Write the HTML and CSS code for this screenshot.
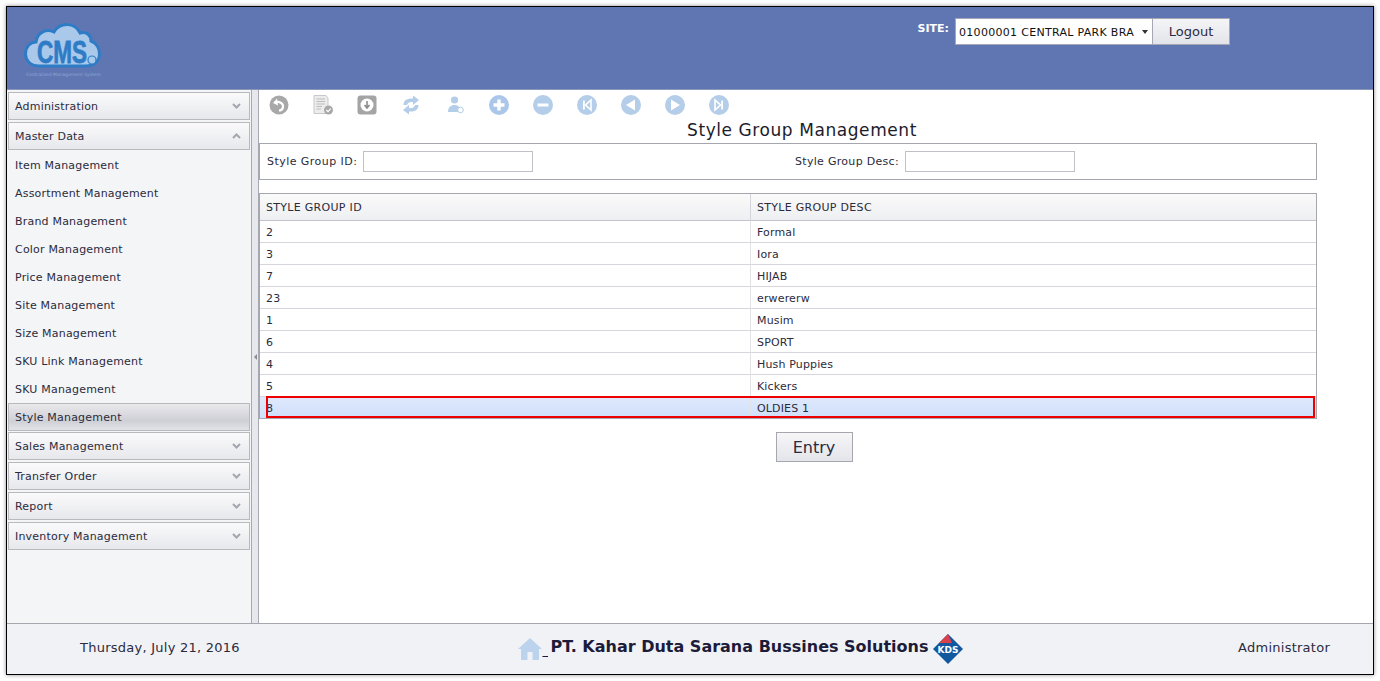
FILE: index.html
```html
<!DOCTYPE html>
<html lang="en">

<head>
    <meta charset="UTF-8">
    <meta name="viewport" content="width=device-width, initial-scale=1.0">
    <title>Style Group Management</title>
    <link rel="stylesheet" href="styles.css">
</head>

<body>
    <div class="window">
        <header class="top">
            <div class="logo">
                <svg width="78" height="48" viewBox="0 0 78 48">
                    <path d="M15 44 C6 44 1.5 38 1.5 32 C1.5 25 6 20 12 20 C13 11 22 6 30 10 C36 0 51 0 56 11 C62 9 67 13 67 19 C72 21 75.5 26 75.5 32 C75.5 39 70 44 62 44 Z" fill="#a9c8ea" stroke="#2f7cc6" stroke-width="3"/>
                    <text x="38" y="41" text-anchor="middle" class="logo-text" textLength="50" lengthAdjust="spacingAndGlyphs">CMS</text>
                    <circle cx="68" cy="38" r="4" fill="#a9c8ea" stroke="#2f7cc6" stroke-width="1.2"/>
                </svg>
                <div class="logo-sub">Centralized Management System</div>
            </div>
            <div class="site">
                <label class="site-label">SITE:</label>
                <div class="site-select">
                    <span class="site-value">01000001 CENTRAL PARK BRA</span>
                    <span class="site-arrow"></span>
                </div>
                <button class="logout">Logout</button>
            </div>
        </header>

        <div class="middle">
            <nav class="sidebar">
                <div class="nav-head">Administration<svg class="chev" width="9" height="6" viewBox="0 0 9 6"><path d="M1 1 L4.5 4.5 L8 1" /></svg></div>
                <div class="nav-head">Master Data<svg class="chev" width="9" height="6" viewBox="0 0 9 6"><path d="M1 5 L4.5 1.5 L8 5" /></svg></div>
                <ul class="nav-list">
                    <li>Item Management</li>
                    <li>Assortment Management</li>
                    <li>Brand Management</li>
                    <li>Color Management</li>
                    <li>Price Management</li>
                    <li>Site Management</li>
                    <li>Size Management</li>
                    <li>SKU Link Management</li>
                    <li>SKU Management</li>
                </ul>
                <div class="nav-active">Style Management</div>
                <div class="nav-head nav-tight">Sales Management<svg class="chev" width="9" height="6" viewBox="0 0 9 6"><path d="M1 1 L4.5 4.5 L8 1" /></svg></div>
                <div class="nav-head">Transfer Order<svg class="chev" width="9" height="6" viewBox="0 0 9 6"><path d="M1 1 L4.5 4.5 L8 1" /></svg></div>
                <div class="nav-head">Report<svg class="chev" width="9" height="6" viewBox="0 0 9 6"><path d="M1 1 L4.5 4.5 L8 1" /></svg></div>
                <div class="nav-head">Inventory Management<svg class="chev" width="9" height="6" viewBox="0 0 9 6"><path d="M1 1 L4.5 4.5 L8 1" /></svg></div>
            </nav>
            <div class="splitter"><span class="splitter-arrow"></span></div>

            <main class="content">
                <div class="toolbar">
                    <!-- back -->
                    <svg width="20" height="20" viewBox="0 0 20 20"><circle cx="10" cy="10" r="9.5" fill="#a8a8a8"/><path d="M8 3.5 L4 8 L9 10.5 Z" fill="#fff"/><path d="M6.5 7.5 C10 6 14.5 8 14 12 C13.7 14 12 15.5 10 15.5" fill="none" stroke="#fff" stroke-width="2.2"/></svg>
                    <!-- document -->
                    <svg width="20" height="20" viewBox="0 0 20 20"><path d="M1 0.5 H13 L15 3 V18.5 H1 Z" fill="#ececec" stroke="#c8c8c8"/><path d="M3.5 4 H12 M3.5 6.5 H12 M3.5 9 H12 M3.5 11.5 H9 M3.5 14 H8" stroke="#bcbcbc"/><circle cx="15.5" cy="15" r="4.5" fill="#a8a8a8"/><path d="M13.3 15 L15 16.7 L17.8 13.6" fill="none" stroke="#fff" stroke-width="1.2"/></svg>
                    <!-- save -->
                    <svg width="20" height="20" viewBox="0 0 20 20"><rect x="0.5" y="0.5" width="19" height="19" rx="3" fill="#a4a4a4"/><circle cx="10" cy="10" r="6.5" fill="#fff"/><path d="M10 6 V12 M7.5 10 L10 13 L12.5 10" fill="none" stroke="#8c8c8c" stroke-width="1.6"/></svg>
                    <!-- refresh -->
                    <svg width="20" height="20" viewBox="0 0 20 20"><path d="M2.5 10 C2.5 5 6.5 3 12 3.5 V0.5 L18 5 L12 10 V7 C9 6.5 6.5 7.5 6 10 Z" fill="#b4cde8"/><path d="M17.5 10 C17.5 15 13.5 17 8 16.5 V19.5 L2 15 L8 10 V13 C11 13.5 13.5 12.5 14 10 Z" fill="#b4cde8"/></svg>
                    <!-- user -->
                    <svg width="20" height="20" viewBox="0 0 20 20"><circle cx="9.5" cy="5" r="3.6" fill="#b4cde8"/><path d="M3 17 C3 12 6 10 9.5 10 C13 10 16 12 16 17 Z" fill="#b4cde8"/><circle cx="15.5" cy="15" r="2.8" fill="#fff" stroke="#b4cde8"/></svg>
                    <!-- add -->
                    <svg width="20" height="20" viewBox="0 0 20 20"><circle cx="10" cy="10" r="10" fill="#aac6e8"/><path d="M10 4.5 V15.5 M4.5 10 H15.5" stroke="#fff" stroke-width="3.4"/></svg>
                    <!-- remove -->
                    <svg width="20" height="20" viewBox="0 0 20 20"><circle cx="10" cy="10" r="10" fill="#b4cde8"/><path d="M4.5 10 H15.5" stroke="#fff" stroke-width="3"/></svg>
                    <!-- first -->
                    <svg width="20" height="20" viewBox="0 0 20 20"><circle cx="10" cy="10" r="10" fill="#b4cde8"/><rect x="6" y="5.5" width="1.8" height="9" fill="#fff"/><path d="M14 5 V15 L8.5 10 Z" fill="none" stroke="#fff" stroke-width="1.6"/></svg>
                    <!-- previous -->
                    <svg width="20" height="20" viewBox="0 0 20 20"><circle cx="10" cy="10" r="10" fill="#b4cde8"/><path d="M14 4.5 V15.5 L5 10 Z" fill="#fff"/></svg>
                    <!-- next -->
                    <svg width="20" height="20" viewBox="0 0 20 20"><circle cx="10" cy="10" r="10" fill="#b4cde8"/><path d="M6 4.5 V15.5 L15 10 Z" fill="#fff"/></svg>
                    <!-- last -->
                    <svg width="20" height="20" viewBox="0 0 20 20"><circle cx="10" cy="10" r="10" fill="#b4cde8"/><rect x="12.2" y="5.5" width="1.8" height="9" fill="#fff"/><path d="M6 5 V15 L11.5 10 Z" fill="none" stroke="#fff" stroke-width="1.6"/></svg>
                </div>

                <h1 class="title">Style Group Management</h1>

                <div class="search">
                    <div class="field field-id">
                        <label>Style Group ID:</label>
                        <input type="text" class="text-input">
                    </div>
                    <div class="field">
                        <label>Style Group Desc:</label>
                        <input type="text" class="text-input">
                    </div>
                </div>

                <div class="grid-wrap">
                    <table class="grid">
                        <thead>
                            <tr>
                                <th class="col-id">STYLE GROUP ID</th>
                                <th>STYLE GROUP DESC</th>
                            </tr>
                        </thead>
                        <tbody>
                            <tr><td>2</td><td>Formal</td></tr>
                            <tr><td>3</td><td>Iora</td></tr>
                            <tr><td>7</td><td>HIJAB</td></tr>
                            <tr><td>23</td><td>erwererw</td></tr>
                            <tr><td>1</td><td>Musim</td></tr>
                            <tr><td>6</td><td>SPORT</td></tr>
                            <tr><td>4</td><td>Hush Puppies</td></tr>
                            <tr><td>5</td><td>Kickers</td></tr>
                            <tr class="selected"><td>8</td><td>OLDIES 1</td></tr>
                        </tbody>
                    </table>
                    <div class="red-mark"></div>
                </div>

                <div class="actions">
                    <button class="entry">Entry</button>
                </div>
            </main>
        </div>

        <footer class="bottom">
            <div class="date">Thursday, July 21, 2016</div>
            <div class="company">
                <svg width="24" height="24" viewBox="0 0 24 24"><path d="M12 1 L24 12 H21 V23 H14.5 V15 H9.5 V23 H3 V12 H0 Z" fill="#bcd3ee"/></svg>
                <span class="company-gap">&nbsp;</span><span class="company-name">PT. Kahar Duta Sarana Bussines Solutions</span>
                <svg class="kds" width="30" height="30" viewBox="0 0 30 30"><path d="M15 0 L30 15 L15 30 L0 15 Z" fill="#12589f"/><path d="M15 0 L6 9 H19 Z" fill="#d9404a"/><text x="15" y="19" text-anchor="middle" class="kds-text">KDS</text></svg>
            </div>
            <div class="user">Administrator</div>
        </footer>
    </div>
</body>

</html>
```

FILE: styles.css
```css
* {
    box-sizing: border-box;
}

body {
    margin: 0;
    background-color: #fff;
    font-family: "DejaVu Sans", Verdana, sans-serif;
    font-size: 11px;
    color: #2b2b3d;
}

.window {
    width: 1368px;
    height: 669px;
    margin: 6px;
    border: 1px solid #000;
    box-shadow: 0 0 4px rgba(0, 0, 0, 0.45);
    display: flex;
    flex-direction: column;
    overflow: hidden;
}

/* header */
.top {
    height: 83px;
    flex: none;
    background-color: #5f76b3;
    border-bottom: 1px solid #8a97b8;
    display: flex;
    justify-content: space-between;
    padding: 15px 143px 0 17px;
}

.logo {
    width: 78px;
}

.logo svg {
    display: block;
    overflow: visible;
}

.logo-text {
    font-family: "Liberation Sans", sans-serif;
    font-size: 32px;
    font-weight: bold;
    fill: #2f7cc6;
    stroke: #2f7cc6;
    stroke-width: 0.8px;
}

.logo-sub {
    font-size: 4.5px;
    line-height: 6px;
    margin-top: 2px;
    padding-left: 2px;
    color: #8fa6d4;
    white-space: nowrap;
}

.site {
    display: flex;
    align-items: flex-start;
    margin-top: -4px;
}

.site-label {
    color: #fff;
    font-weight: bold;
    font-size: 11px;
    line-height: 14px;
    margin: 4px 6px 0 0;
}

.site-select {
    width: 198px;
    height: 27px;
    background-color: #fff;
    border: 1px solid #a6a6b4;
    display: flex;
    align-items: center;
    justify-content: space-between;
    padding: 1px 4px 0 3px;
    color: #111;
    letter-spacing: 0.3px;
}

.site-value {
    width: 178px;
    overflow: hidden;
    white-space: nowrap;
}

.site-arrow {
    border-left: 3.5px solid transparent;
    border-right: 3.5px solid transparent;
    border-top: 4px solid #333;
}

.logout {
    width: 77px;
    height: 27px;
    border: 1px solid #a6a6b4;
    border-left: 0;
    background: linear-gradient(#f5f5f7, #e3e4ea);
    font-family: inherit;
    font-size: 13px;
    color: #2b2b3d;
    padding: 0;
}

/* sidebar */
.middle {
    flex: 1;
    display: flex;
    min-height: 0;
}

.sidebar {
    width: 244px;
    flex: none;
    background-color: #f4f5f7;
    padding: 2px 1px 0 1px;
}

.nav-head,
.nav-active {
    height: 28px;
    border: 1px solid #b9b9bd;
    margin-bottom: 2px;
    padding: 0 8px 0 6px;
    display: flex;
    align-items: center;
    justify-content: space-between;
    letter-spacing: 0.2px;
    background: linear-gradient(#fafafb, #e7e8ec);
}

.nav-tight {
    margin-top: 1px;
}

.chev {
    fill: none;
    stroke: #a6a6ae;
    stroke-width: 2;
}

.nav-list {
    list-style: none;
    margin: 0;
    padding: 0;
}

.nav-list li {
    height: 28px;
    line-height: 28px;
    padding-left: 7px;
    letter-spacing: 0.2px;
}

.nav-active {
    margin: -1px 0 0;
    background: linear-gradient(#e9e9ec, #cfd0d6 65%, #e2e3e7);
}

.splitter {
    width: 8px;
    flex: none;
    background-color: #e6e8ee;
    border-left: 1px solid #a8a8b0;
    border-right: 1px solid #a8a8b0;
    display: flex;
    align-items: center;
    justify-content: center;
}

.splitter-arrow {
    border-top: 3px solid transparent;
    border-bottom: 3px solid transparent;
    border-right: 3px solid #8a8a92;
}

/* main area */
.content {
    flex: 1;
    background-color: #fff;
    min-width: 0;
}

.toolbar {
    height: 30px;
    display: flex;
    align-items: center;
    gap: 24px;
    padding: 0 0 0 10px;
}

.title {
    width: 1086px;
    margin: 0;
    height: 23px;
    line-height: 20px;
    text-align: center;
    font-size: 17px;
    font-weight: normal;
    letter-spacing: 0.57px;
    color: #1c1c2c;
}

.search {
    width: 1058px;
    height: 37px;
    border: 1px solid #a6a6ae;
    display: flex;
    align-items: center;
    padding-left: 7px;
    letter-spacing: 0.3px;
}

.field {
    display: flex;
    align-items: center;
    gap: 6px;
}

.field-id {
    width: 528px;
    letter-spacing: 0.45px;
}

.text-input {
    width: 170px;
    height: 21px;
    border: 1px solid #c0c0c8;
    background-color: #fff;
    padding: 0;
}

.grid-wrap {
    position: relative;
    width: 1058px;
    margin-top: 13px;
}

.grid {
    width: 100%;
    border-collapse: separate;
    border-spacing: 0;
    table-layout: fixed;
    border: 1px solid #a6a6ae;
}

.grid th {
    height: 27px;
    font-weight: normal;
    text-align: left;
    padding: 0 6px;
    letter-spacing: 0.3px;
    background: linear-gradient(#fafafa, #eeeff2);
    border-bottom: 1px solid #c4c4cc;
    border-left: 1px solid #d4d4da;
}

.grid .col-id {
    width: 490px;
    border-left: 0;
}

.grid td {
    height: 22px;
    padding: 1px 6px 0;
    border-bottom: 1px solid #d6d6dc;
    border-left: 1px solid #e2e2e6;
    letter-spacing: 0.15px;
}

.grid td:first-child {
    border-left: 0;
}

.grid tr.selected td {
    height: 21px;
    background: linear-gradient(#dfe9fd, #cfdffa);
    border-bottom: 0;
}

/* red box on the screenshot, lies over the selected row */
.red-mark {
    position: absolute;
    left: 7px;
    right: 2px;
    bottom: 1px;
    height: 22px;
    border: 2px solid #ee0000;
}

.actions {
    width: 1110px;
    margin-top: 13px;
    display: flex;
    justify-content: center;
}

.entry {
    width: 77px;
    height: 30px;
    border: 1px solid #a6a6ae;
    background: linear-gradient(#f6f6f8, #e4e5ea);
    font-family: inherit;
    font-size: 16px;
    color: #2b2b3d;
    padding: 0;
}

/* footer */
.bottom {
    height: 51px;
    flex: none;
    background-color: #f1f2f5;
    border-top: 1px solid #a6a6ae;
    display: flex;
    align-items: center;
    justify-content: space-between;
    padding: 0 43px 0 73px;
    font-size: 13px;
}

.date,
.user {
    letter-spacing: 0.25px;
    padding-bottom: 4px;
}

.company {
    display: flex;
    align-items: center;
    font-size: 16px;
    font-weight: bold;
    color: #1c1c3a;
    margin-left: 3px;
}

.company-name {
    padding-bottom: 5px;
}

.company-gap {
    width: 8px;
    overflow: hidden;
    text-decoration: underline;
}

.kds {
    margin-left: 4px;
}

.kds-text {
    font-family: "DejaVu Sans", sans-serif;
    font-size: 9px;
    font-weight: bold;
    fill: #fff;
}
```
